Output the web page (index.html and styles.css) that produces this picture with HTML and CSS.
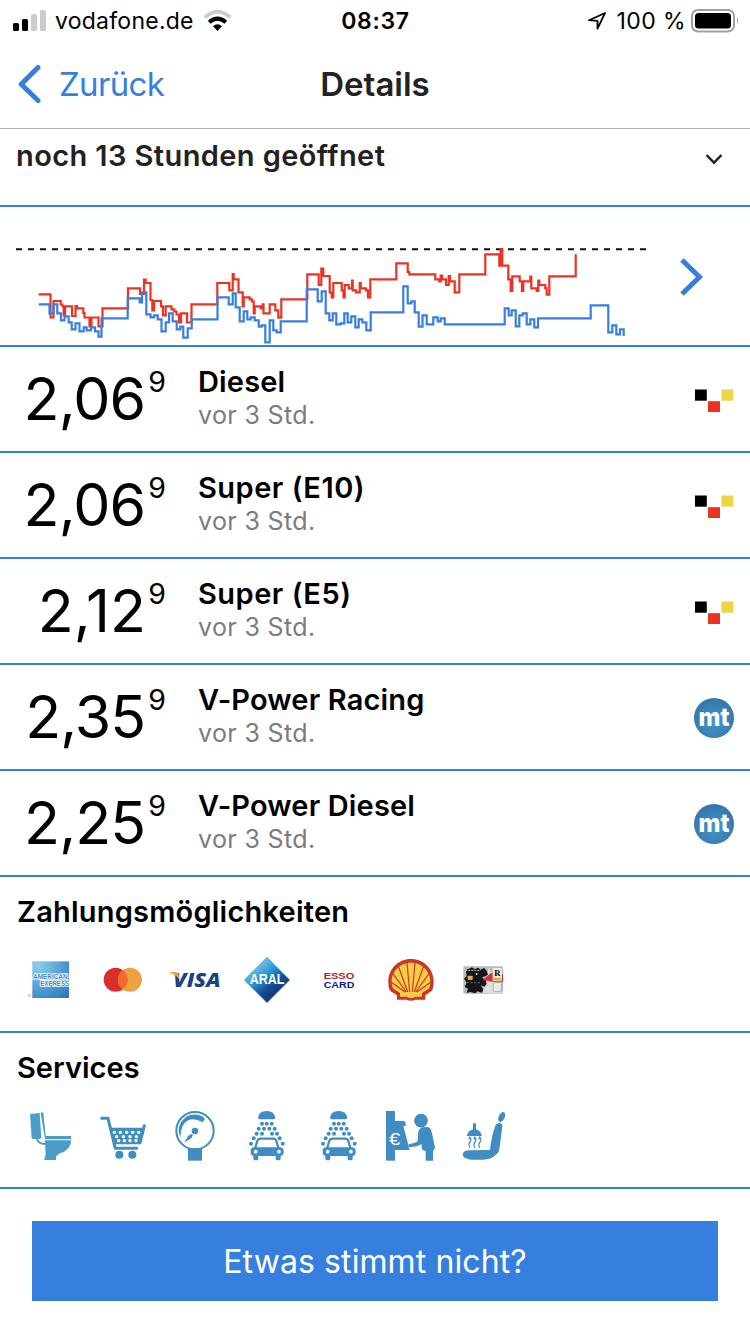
FILE: index.html
```html
<!DOCTYPE html>
<html lang="de">
<head>
    <meta charset="UTF-8">
    <title>Details</title>
    <link rel="stylesheet" href="styles.css">
</head>
<body>
    <!-- Symbole, die mehrfach gebraucht werden -->
    <svg class="defs">
        <symbol id="mtsk" viewBox="0 0 40 40">
            <rect x="1" y="9.5" width="11.8" height="11.2" fill="#000"/>
            <rect x="14" y="21.2" width="12" height="10.8" fill="#ea3323"/>
            <rect x="27.4" y="9.5" width="11.9" height="11.2" fill="#eed547"/>
        </symbol>
        <symbol id="wash" viewBox="0 0 216 156">
            <path d="M84 25Q86 3 110 3Q134 3 136 25Q134 28 130 28H90Q86 28 84 25Z"/>
            <g>
                <circle cx="96" cy="41" r="6"/><circle cx="110" cy="41" r="6"/><circle cx="125" cy="41" r="6"/>
                <circle cx="86" cy="56" r="6"/><circle cx="102" cy="56" r="6"/><circle cx="118" cy="56" r="6"/><circle cx="134" cy="56" r="6"/>
                <circle cx="80" cy="71" r="6"/><circle cx="96" cy="71" r="6"/><circle cx="126" cy="71" r="6"/><circle cx="141" cy="71" r="6"/>
                <circle cx="71" cy="85" r="6"/><circle cx="149" cy="85" r="6"/><circle cx="63" cy="101" r="6"/><circle cx="158" cy="101" r="6"/>
            </g>
            <path class="line" stroke-width="7" d="M75 116L82 93Q84 86 92 86H129Q137 86 139 93L146 116"/>
            <rect x="62" y="112" width="99" height="26" rx="11"/>
            <rect x="70" y="128" width="15" height="23" rx="5"/>
            <rect x="137" y="128" width="15" height="23" rx="5"/>
            <circle cx="77" cy="125" r="5.5" fill="#fff"/><circle cx="147" cy="125" r="5.5" fill="#fff"/>
        </symbol>
    </svg>

    <header>
        <div class="status">
            <div class="status-left">
                <svg width="34" height="22" viewBox="0 0 34 22">
                    <rect x="0" y="13" width="6" height="8" rx="1.5"/>
                    <rect x="9" y="9" width="6" height="12" rx="1.5"/>
                    <rect x="18" y="4" width="6" height="17" rx="1.5" fill="#ccc"/>
                    <rect x="27" y="0" width="6" height="21" rx="1.5" fill="#ccc"/>
                </svg>
                <span class="carrier">vodafone.de</span>
                <svg width="30" height="22" viewBox="0 0 30 22" fill="none">
                    <path d="M1.8 7.2Q14.5 -3.6 27.2 7.2" stroke="#ccc" stroke-width="4"/>
                    <path d="M6.2 12.2Q14.5 5 22.8 12.2" stroke="#000" stroke-width="4"/>
                    <path d="M10 16.3Q14.5 12.3 19 16.3L14.5 21Z" fill="#000"/>
                </svg>
            </div>
            <div class="time">08:37</div>
            <div class="status-right">
                <svg width="20" height="20" viewBox="0 0 20 20" fill="none" stroke="#000" stroke-width="1.8" stroke-linejoin="round">
                    <path d="M2 9.2L18 2L10.5 17.6V9.8Z"/>
                </svg>
                <span class="percent">100 %</span>
                <svg width="49" height="24" viewBox="0 0 49 24">
                    <rect x="1" y="1" width="42" height="21.5" rx="6" fill="none" stroke="#a0a0a0" stroke-width="2"/>
                    <rect x="4" y="4" width="36" height="15.5" rx="3.5"/>
                    <path d="M46 8Q48.5 11.5 46 15Z" fill="#a0a0a0"/>
                </svg>
            </div>
        </div>
        <nav>
            <a class="back" href="#">
                <svg width="24" height="40" viewBox="0 0 24 40"><path d="M20 3.5L3.2 20.3L20 36.5" fill="none" stroke="#377fde" stroke-width="5" stroke-linecap="round" stroke-linejoin="round"/></svg>
                <span>Zurück</span>
            </a>
            <h1>Details</h1>
        </nav>
    </header>

    <section class="opening">
        <h2 class="open-text">noch 13 Stunden geöffnet</h2>
        <svg width="20" height="14" viewBox="0 0 20 14"><path d="M2.5 3L10 10.7L17.5 3" fill="none" stroke="#222" stroke-width="2.4"/></svg>
    </section>

    <section class="history">
        <svg width="650" height="138" viewBox="0 207 650 138" fill="none">
            <path d="M16 249.3H646" stroke="#111" stroke-width="2" stroke-dasharray="6 6"/>
            <path class="price-red" d="M38.7 294.3H50.5V317.5H53.5V301H60.7V304.5H62.5V306.3H63.7V315H65V306.3H72V316H75.5V306H77V308.3H83.3V313H84.5V317.5H89.5V326.5H91.5V317.5H98.5V326.5H102.5V308.3H128V288.3H140V294H144V279.5H145.7V283H150.5V300H152.3V310.3H154V301H161V306.3H163V315.3H165.7V306.3H171.5V309.3H174.3V311.5H176.5V314.5H179V322.5H181V313.3H187V322.5H191.5V304.3H217.3V283H229.3V290.3H232.7V274H233.7V279.3H238.5V292.3H242.7V306.3H243.7V297.3H249.7V299.3H252V301.5H253.7V313.3H254.7V306.3H260.7V308.3H262.7V304.3H263.5V313.3H269.7V304.3H275.3V310.3H278.3V317.7H281.3V299.3H307.3V274.3H318.7V285H321.3V268.7H323.3V276H329.7V292.3H331.7V297.3H333.3V283H341.7V290.3H343.5V297.3H344.7V285H348.7V288.3H352V280.7H352.7V290.3H356V292.3H359.7V283H360.7V288.3H366V290.3H368V297.3H370.3V279.3H396.3V263.3H407.7V272H409.3V274.3H435.3V279.3H439.3V281.3H440.7V275.5H442V279.3H446V285H448.7V276H450V281.3H454.7V292.3H459.3V274.3H485.3V254.3H499.3V265.7H500.7V249H502.3V265.7H508.3V279.3H510.7V291H512.3V276.3H519.7V281.3H522V291H523.3V281.3H530.3V276.7H531.3V288.3H536.7V291H538.3V280.7H539.3V285H545.3V288.3H546.7V294.7H549.3V276.3H575.7V254.3"/>
            <path class="price-blue" d="M38.7 304.3H49.5V313.3H53.5V304.3H57.3V313.3H61V320.3H64.5V316.3H68.7V322.3H71.7V329.3H75.5V323.3H79.5V331.3H83.7V327.3H86.7V330.3H91V327.3H95V331.3H98.5V336.7H101.5V318.3H127.7V298.3H139.7V302.3H142V292.3H146.3V314.3H150.5V317.3H154V315.3H157.7V319.3H161.5V331.3H165.7V322.3H169V313.3H172.7V321.3H176.7V329.3H180.3V326.7H183.3V337.7H187.7V328.3H191.7V319.3H217.5V297.3H228.7V304.3H232.7V293.3H235.7V307.3H239.7V321.3H243.7V311.3H247.3V319.3H250.7V317.3H254.7V320.3H258.7V326.7H261.7V325.3H265.3V342.3H269.7V320.3H273.3V330.3H276.7V332.3H280.7V321.3H306.7V289.3H317.7V301.3H321.7V291.3H325.7V313.3H329.3V320.3H332.7V313.3H336.3V324.3H340.7V323.3H344.3V313.3H347.7V322.3H351.3V316.3H355.3V327.3H358.7V319.3H362.3V322.3H366.3V330.3H370.7V312.3H403.3V286.3H407.7V303.3H411.3V301.3H414.7V312.3H418.7V326.7H422.5V315.3H426.7V324.3H433.3V317.3H437.7V321.3H440.7V318.3H444.7V324.3H504.7V308.3H508.7V315.3H511.7V310.3H515.7V326.3H519.3V315.3H522.7V313.3H526.7V324.3H530.3V319.3H534.3V327.3H538V318.3H590.7V305.3H608.3V332.3H612.3V325.3H616.3V334.3H620V329.3H623.7V336"/>
        </svg>
        <svg class="more" width="24" height="40" viewBox="0 0 24 40"><path d="M2 3L19.5 20L2 37" fill="none" stroke="#377fde" stroke-width="5"/></svg>
    </section>

    <ul class="prices">
        <li>
            <div class="price"><span>2,06</span><sup>9</sup></div>
            <div class="fuel"><h3>Diesel</h3><p>vor 3 Std.</p></div>
            <svg class="source"><use href="#mtsk"/></svg>
        </li>
        <li>
            <div class="price"><span>2,06</span><sup>9</sup></div>
            <div class="fuel"><h3 class="wide">Super (E10)</h3><p>vor 3 Std.</p></div>
            <svg class="source"><use href="#mtsk"/></svg>
        </li>
        <li>
            <div class="price"><span class="loose">2,12</span><sup>9</sup></div>
            <div class="fuel"><h3 class="wide">Super (E5)</h3><p>vor 3 Std.</p></div>
            <svg class="source"><use href="#mtsk"/></svg>
        </li>
        <li>
            <div class="price"><span>2,35</span><sup>9</sup></div>
            <div class="fuel"><h3>V-Power Racing</h3><p>vor 3 Std.</p></div>
            <svg class="source mt" viewBox="0 0 40 40"><text x="4.5" y="28" textLength="31" lengthAdjust="spacingAndGlyphs">mt</text></svg>
        </li>
        <li>
            <div class="price"><span>2,25</span><sup>9</sup></div>
            <div class="fuel"><h3>V-Power Diesel</h3><p>vor 3 Std.</p></div>
            <svg class="source mt" viewBox="0 0 40 40"><text x="4.5" y="28" textLength="31" lengthAdjust="spacingAndGlyphs">mt</text></svg>
        </li>
    </ul>

    <section class="group">
        <h2>Zahlungsmöglichkeiten</h2>
        <div class="icons">
            <!-- American Express -->
            <svg viewBox="0 0 216 156">
                <defs>
                    <radialGradient id="amex" cx=".15" cy=".1" r="1.2">
                        <stop offset="0" stop-color="#8fcdec"/>
                        <stop offset=".6" stop-color="#4a9ad2"/>
                        <stop offset="1" stop-color="#2e74b8"/>
                    </radialGradient>
                </defs>
                <rect x="55" y="22" width="110" height="110" fill="url(#amex)"/>
                <text class="amex-text" x="57" y="75" textLength="104" lengthAdjust="spacingAndGlyphs">AMERICAN</text>
                <text class="amex-text" x="79" y="97" textLength="86" lengthAdjust="spacingAndGlyphs">EXPRESS</text>
                <text x="41" y="133" font-size="13" fill="#6aa9d8">®</text>
            </svg>
            <!-- Mastercard -->
            <svg viewBox="0 0 216 156">
                <circle cx="89" cy="77" r="36" fill="#d82f2c"/>
                <circle cx="132" cy="77" r="36" fill="#e9a33f"/>
                <path d="M110.500 48A36 36 0 0 1 110.500 106A36 36 0 0 1 110.500 48Z" fill="#ee6b2d"/>
            </svg>
            <!-- Visa -->
            <svg viewBox="0 0 216 156">
                <text class="visa-text" x="46" y="99" textLength="142" lengthAdjust="spacingAndGlyphs">VISA</text>
                <path d="M35 54H54Q61 55 62 63L66 80Q56 62 35 56Z" fill="#e9a33f"/>
            </svg>
            <!-- Aral -->
            <svg viewBox="0 0 216 156">
                <defs>
                    <linearGradient id="aral" x1=".15" y1=".1" x2=".75" y2=".9">
                        <stop offset="0" stop-color="#8fd8f5"/>
                        <stop offset=".42" stop-color="#2a94d6"/>
                        <stop offset=".7" stop-color="#144a94"/>
                        <stop offset="1" stop-color="#16306c"/>
                    </linearGradient>
                </defs>
                <path d="M111 10L179 78L111 146L43 78Z" fill="url(#aral)" stroke="#3f8fc9" stroke-width="2"/>
                <text class="aral-text" x="59" y="90" textLength="104" lengthAdjust="spacingAndGlyphs">ARAL</text>
            </svg>
            <!-- Esso Card -->
            <svg viewBox="0 0 216 156">
                <text class="esso-text" x="65" y="74" fill="#b3211f" textLength="92" lengthAdjust="spacingAndGlyphs">ESSO</text>
                <text class="esso-text" x="65" y="101" fill="#13139b" textLength="92" lengthAdjust="spacingAndGlyphs">CARD</text>
            </svg>
            <!-- Shell -->
            <svg viewBox="0 0 216 156">
                <path d="M111 15C150 15 179 45 179 83Q179 104 172 112L154 124V137H124Q111 143 98 137H69V124L50 112Q43 104 43 83C43 45 72 15 111 15Z" fill="#cd3529"/>
                <path d="M111 26C145 26 169 53 169 82Q169 98 164 104L144 117V128H124Q111 136 98 128H78V117L58 104Q53 98 53 82C53 53 77 26 111 26Z" fill="#f3cd46"/>
                <path d="M107 114L99 26M115 114L123 26M101 114L73 36M121 114L149 36M97 114L57 59M125 114L165 59M93 114L51 84M129 114L171 84" stroke="#cd3529" stroke-width="3.500"/>
            </svg>
            <!-- Tankkarte -->
            <svg viewBox="0 0 216 156">
                <rect x="52" y="37" width="119" height="82" rx="4" fill="#b9b9b9"/>
                <path d="M128 40L170 118H110Z" fill="#dedede"/>
                <path d="M60 48L78 40L86 46L96 41L104 47L114 42L122 50L126 62L118 67L108 70L120 80L122 90L116 98L104 94L112 106L108 116L94 112L88 118L72 114L62 117L66 104L56 98L62 86L54 74L62 66Z" fill="#151515"/>
                <path d="M110 78L136 56L171 60V84H142Z" fill="#e02a43"/>
                <rect x="140" y="42" width="28" height="40" rx="2" fill="#f2eee0"/>
                <rect x="142" y="71" width="24" height="9" fill="#dfb53c"/>
                <text class="card-text" x="145" y="67">R</text>
                <rect x="142" y="86" width="24" height="26" rx="2" fill="#ececec" stroke="#999" stroke-width="2"/>
                <rect x="65" y="65" width="15" height="13" rx="2" fill="#e2ae3c"/>
                <path d="M62 86H104" stroke="#666" stroke-width="3" stroke-dasharray="7 4"/>
                <path d="M58 49H104" stroke="#ccc" stroke-width="3" stroke-dasharray="6 3"/>
                <circle cx="92" cy="60" r="3" fill="#ddd"/>
            </svg>
        </div>
    </section>

    <section class="group">
        <h2 class="tight">Services</h2>
        <div class="icons services">
            <!-- WC -->
            <svg class="wc" viewBox="0 0 216 156">
                <path d="M48 12L77 9L82 84L76 87H56L53 84Z"/>
                <path d="M80 8Q84 5 88 8L95 78H171V88H93Z"/>
                <path class="line" stroke-width="6" d="M69 84Q70 102 94 102"/>
                <path d="M93 91H171Q171 114 150 125Q128 132 126 142V150H90Q97 138 94 118Z"/>
            </svg>
            <!-- Shop -->
            <svg viewBox="0 0 216 156">
                <path class="line" stroke-width="9" d="M47 25H66L88 115H152"/>
                <path d="M74 53H170L158 103H84Z"/>
                <path class="line" stroke-width="9" d="M175 47L162 99"/>
                <g fill="#fff">
                    <circle cx="85" cy="67" r="5"/><circle cx="103" cy="67" r="5"/><circle cx="122" cy="67" r="5"/><circle cx="140" cy="67" r="5"/><circle cx="158" cy="67" r="5"/>
                    <circle cx="92" cy="80" r="5"/><circle cx="112" cy="80" r="5"/><circle cx="132" cy="80" r="5"/><circle cx="151" cy="80" r="5"/>
                    <circle cx="98" cy="92" r="5"/><circle cx="115" cy="92" r="5"/><circle cx="132" cy="92" r="5"/><circle cx="150" cy="92" r="5"/>
                </g>
                <circle cx="100" cy="134" r="12"/><circle cx="139" cy="134" r="12"/>
            </svg>
            <!-- Luftdruck -->
            <svg viewBox="0 0 216 156">
                <circle class="line" stroke-width="6" cx="111" cy="62" r="56"/>
                <path d="M68 83A47 47 0 0 1 141 26L134 37Q92 14 74 48Q66 66 68 83Z"/>
                <circle cx="111" cy="63" r="10"/>
                <path d="M79 97L90 78L100 72L105 75L100 85L93 89Z"/>
                <rect x="90" y="115" width="42" height="37"/>
            </svg>
            <svg><use href="#wash"/></svg>
            <svg><use href="#wash"/></svg>
            <!-- Geldautomat -->
            <svg viewBox="0 0 216 156">
                <rect x="36" y="3" width="27" height="149"/>
                <path d="M62 33H90L95 38V48H88L107 120H62Z"/>
                <text class="euro" x="45" y="104" textLength="34" lengthAdjust="spacingAndGlyphs">€</text>
                <circle cx="141" cy="32" r="20.500"/>
                <path d="M133 64Q138 51 153 51H160Q170 53 173 66L183 112Q183 120 177 122V152H155V123L145 120Q142 110 143 102Q128 112 104 111V103Q120 102 131 94Z"/>
            </svg>
            <!-- Sitzreinigung -->
            <svg viewBox="0 0 216 156">
                <path d="M148 47Q151 38 161 39Q170 41 169 50L160 118Q158 130 148 135Q136 149 110 149H74Q50 146 50 133Q52 120 76 121L132 120Q136 80 148 47Z"/>
                <ellipse cx="167" cy="21" rx="9" ry="16" transform="rotate(25 167 21)"/>
                <path d="M81 40H90V58Q102 61 106 73L108 78H62L64 73Q69 61 81 58Z"/>
                <path class="line" stroke-width="3.500" d="M71 81q7 8 1 15t-1 16M86 81q7 8 1 15t-1 16M101 81q7 8 1 15t-1 16"/>
                <path d="M66 88l5-8 5 8zM81 88l5-8 5 8zM96 88l5-8 5 8z"/>
            </svg>
        </div>
    </section>

    <button class="report">Etwas stimmt nicht?</button>
</body>
</html>
```
FILE: styles.css
```css
* {
    margin: 0;
    padding: 0;
    box-sizing: border-box;
    list-style: none;
}
body {
    width: 750px;
    height: 1334px;
    background: #fff;
    color: #000;
    font-family: Inter, "Liberation Sans", sans-serif;
    white-space: nowrap;
    overflow: hidden;
}
svg {
    display: block;
    flex: none;
}
h1, h2, h3 {
    font-weight: 600;
}
.defs {
    position: absolute;
    width: 0;
    height: 0;
}

/* Kopfbereich */
header {
    height: 129px;
    border-bottom: 1px solid #b2b2b2;
}
.status {
    display: grid;
    grid-template-columns: 1fr auto 1fr;
    align-items: center;
    height: 40px;
    padding: 0 10px 0 13px;
    font-size: 23px;
    line-height: 40px;
}
.status-left, .status-right {
    display: flex;
    align-items: center;
}
.status-right {
    justify-content: flex-end;
}
.carrier {
    margin: 1px 9px 0 8px;
    letter-spacing: 0.25px;
}
.time {
    margin: 1px 2px 0 0;
    font-weight: 600;
    letter-spacing: 0.7px;
}
.percent {
    margin: 1px 5px 0 8px;
    letter-spacing: 0.4px;
}
.status-right svg:first-child {
    margin-right: 2px;
}
nav {
    display: grid;
    grid-template-columns: 1fr auto 1fr;
    align-items: center;
    height: 88px;
    padding: 0 18px;
    line-height: 88px;
}
.back {
    display: flex;
    align-items: center;
    gap: 17px;
    color: #377fde;
    font-size: 33px;
    letter-spacing: -0.65px;
    text-decoration: none;
}
h1 {
    color: #222;
    font-size: 33px;
}

/* Öffnungszeiten */
.opening {
    display: flex;
    justify-content: space-between;
    height: 78px;
    padding: 9px 26px 0 16px;
    border-bottom: 2px solid #377fde;
    color: #222;
}
.opening svg {
    margin-top: 14px;
}
h2 {
    font-size: 29px;
    line-height: 36px;
}
.open-text {
    letter-spacing: 0.4px;
}

/* Preisverlauf */
.history {
    display: flex;
    height: 140px;
    border-bottom: 2px solid #377fde;
}
.more {
    margin: 50px 0 0 30px;
}
.price-red, .price-blue {
    stroke-width: 2.2;
}
.price-red {
    stroke: #ea3323;
}
.price-blue {
    stroke: #377fde;
}

/* Preise */
.prices li {
    display: flex;
    height: 106px;
    padding-right: 16px;
    border-bottom: 2px solid #377fde;
}
.price {
    display: flex;
    justify-content: flex-end;
    width: 166px;
}
.price span {
    padding: 22px 3px 0 0;
    font-size: 59px;
    line-height: 60px;
    letter-spacing: -0.9px;
}
.price .loose {
    letter-spacing: 0.2px;
    padding-right: 2px;
}
.price sup {
    padding-top: 18px;
    font-size: 28.5px;
    line-height: 34px;
}
.fuel {
    flex: 1;
    padding: 18px 0 0 32px;
}
.fuel h3 {
    font-size: 29px;
    line-height: 34px;
    letter-spacing: 0.15px;
}
.fuel .wide {
    letter-spacing: 0.5px;
}
.fuel p {
    color: #7b7b80;
    font-size: 25px;
    line-height: 32px;
    letter-spacing: 0.35px;
}
.source {
    width: 40px;
    height: 40px;
    margin-top: 33px;
}
.mt {
    border-radius: 50%;
    background: radial-gradient(circle at 50% 60%, #4197c8, #3675ac 75%);
    fill: #fff;
    font: 800 26px Inter, sans-serif;
}

/* Zahlungsarten und Services */
.group {
    height: 156px;
    padding-top: 17px;
    border-bottom: 2px solid #377fde;
}
.group h2 {
    padding-left: 17px;
    letter-spacing: 0.22px;
}
.group .tight {
    letter-spacing: 0;
}
.icons {
    display: flex;
    margin-top: 24px;
    padding-left: 14px;
}
.icons svg {
    width: 72px;
    height: 52px;
}
.services {
    fill: #3f8dc2;
    stroke: none;
}
.services .wc {
    fill: #4b9dc7;
}
.line {
    fill: none;
    stroke: #3f8dc2;
    stroke-linecap: round;
    stroke-linejoin: round;
}
.wc .line {
    stroke: #4b9dc7;
}
.amex-text {
    fill: #3f8ac5;
    stroke: #fff;
    stroke-width: 5px;
    paint-order: stroke;
    font: bold 20px "Liberation Sans", sans-serif;
}
.visa-text {
    fill: #1a4284;
    font: italic 800 60px "Open Sans", sans-serif;
}
.aral-text {
    fill: #fff;
    font: bold 43px "Liberation Sans", sans-serif;
}
.esso-text {
    font: bold 29px "Liberation Sans", sans-serif;
}
.card-text {
    font: bold 26px "Liberation Serif", serif;
}
.euro {
    fill: #fff;
    font: 52px "Liberation Sans", sans-serif;
}

.report {
    display: block;
    width: 686px;
    height: 80px;
    margin: 32px auto 0;
    padding-top: 2px;
    border: 0;
    background: #377fde;
    color: #fff;
    font: 32px/78px Inter, sans-serif;
    letter-spacing: 0.1px;
}
```
